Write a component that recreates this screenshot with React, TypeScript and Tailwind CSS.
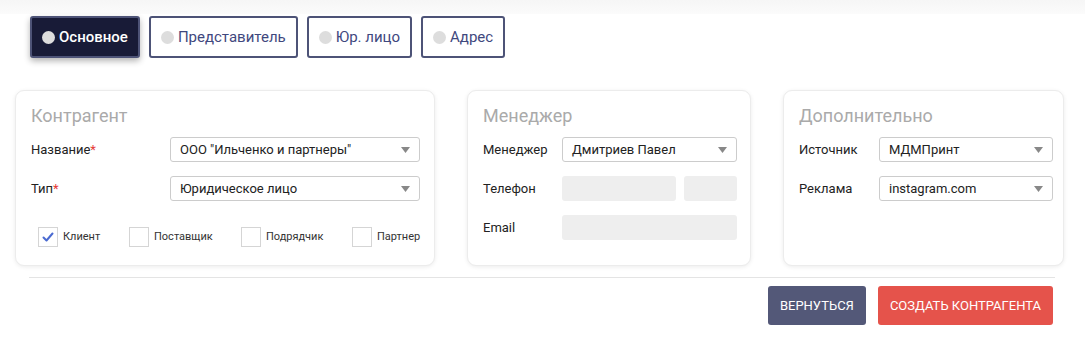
import { useState } from 'react';

const tabs = ['Основное', 'Представитель', 'Юр. лицо', 'Адрес'];

const Caret = () => (
  <svg className="w-[9px] h-[6px] text-[#888]" viewBox="0 0 9 6" fill="currentColor">
    <path d="M0 0h9L4.5 6z" />
  </svg>
);

const Select = ({ value, className = '' }: { value: string; className?: string }) => (
  <div
    className={`flex items-center justify-between h-[25px] rounded-[3px] border border-[#ccc] bg-white pl-[9px] pr-[9px] text-[13px] text-[#222] ${className}`}
  >
    <span>{value}</span>
    <Caret />
  </div>
);

const Field = ({ className = '' }: { className?: string }) => (
  <div className={`h-[25px] rounded-[3px] bg-[#eee] ${className}`} />
);

const Label = ({ text, required }: { text: string; required?: boolean }) => (
  <span className="text-[13px] text-[#222]">
    {text}
    {required && <span className="text-[#e53935]">*</span>}
  </span>
);

const Check = ({ label, checked }: { label: string; checked?: boolean }) => (
  <div className="flex items-center gap-[5px]">
    <div className="flex h-[20px] w-[20px] items-center justify-center border border-[#d5d5d5] bg-white">
      {checked && (
        <svg className="w-[12px] h-[10px]" viewBox="0 0 12 10" fill="none">
          <path d="M1.5 5.5l3 3 6-7" stroke="#4a6ad1" strokeWidth={2} strokeLinecap="round" strokeLinejoin="round" />
        </svg>
      )}
    </div>
    <span className="text-[11px] text-[#333]">{label}</span>
  </div>
);

const Card = ({ title, children }: { title: string; children: React.ReactNode }) => (
  <div className="h-[176px] rounded-[9px] border border-[#ececec] bg-white px-[15px] pt-[11px] shadow-[0_1px_4px_rgba(0,0,0,0.08)]">
    <div className="mb-[8px] text-[18px] text-[#aaa]">{title}</div>
    {children}
  </div>
);

export default function App() {
  const [active, setActive] = useState(0);

  return (
    <div className="min-h-[337px] w-[1085px] bg-white" style={{ fontFamily: 'Roboto, "Liberation Sans", sans-serif' }}>
      <div className="h-[14px] bg-gradient-to-b from-[#f6f6f6] to-[#fbfbfb]" />
      <div className="flex gap-[9px] pl-[30px] pt-[2px]">
        {tabs.map((t, i) => (
          <button
            key={t}
            onClick={() => setActive(i)}
            className={
              i === active
                ? 'flex h-[42px] items-center gap-[4px] rounded-[3px] border-2 border-[#4d5377] bg-[#181b37] px-[10px] text-[15px] font-medium text-white shadow-[0_3px_6px_rgba(0,0,0,0.3)]'
                : 'flex h-[42px] items-center gap-[4px] rounded-[3px] border-2 border-[#4d5377] bg-white px-[10px] text-[15px] text-[#3f487e]'
            }
          >
            <span className="h-[13px] w-[13px] rounded-full bg-[#ddd]" />
            {t}
          </button>
        ))}
      </div>

      <div className="mt-[32px] grid grid-cols-[420px_284px_281px] gap-[32px] pl-[15px]">
        <Card title="Контрагент">
          <div className="grid grid-cols-[139px_250px] items-center gap-y-[14px]">
            <Label text="Название" required />
            <Select value={'ООО "Ильченко и партнеры"'} />
            <Label text="Тип" required />
            <Select value="Юридическое лицо" />
          </div>
          <div className="mt-[26px] grid grid-cols-[91px_112px_111px_auto] items-center pl-[7px]">
            <Check label="Клиент" checked />
            <Check label="Поставщик" />
            <Check label="Подрядчик" />
            <Check label="Партнер" />
          </div>
        </Card>

        <Card title="Менеджер">
          <div className="grid grid-cols-[79px_175px] items-center gap-y-[14px]">
            <Label text="Менеджер" />
            <Select value="Дмитриев Павел" />
            <Label text="Телефон" />
            <div className="flex gap-[8px]">
              <Field className="w-[114px]" />
              <Field className="flex-1" />
            </div>
            <Label text="Email" />
            <Field />
          </div>
        </Card>

        <Card title="Дополнительно">
          <div className="grid grid-cols-[80px_174px] items-center gap-y-[14px]">
            <Label text="Источник" />
            <Select value="МДМПринт" />
            <Label text="Реклама" />
            <Select value="instagram.com" />
          </div>
        </Card>
      </div>

      <div className="ml-[29px] mt-[11px] w-[1026px] border-t border-[#e4e4e4]" />

      <div className="flex justify-end gap-[12px] pr-[32px] pt-[8px]">
        <button className="h-[39px] rounded-[3px] bg-[#535878] px-[12px] text-[13px] text-white">ВЕРНУТЬСЯ</button>
        <button className="h-[39px] rounded-[3px] bg-[#e5534b] px-[12px] text-[13px] text-white">СОЗДАТЬ КОНТРАГЕНТА</button>
      </div>
    </div>
  );
}
